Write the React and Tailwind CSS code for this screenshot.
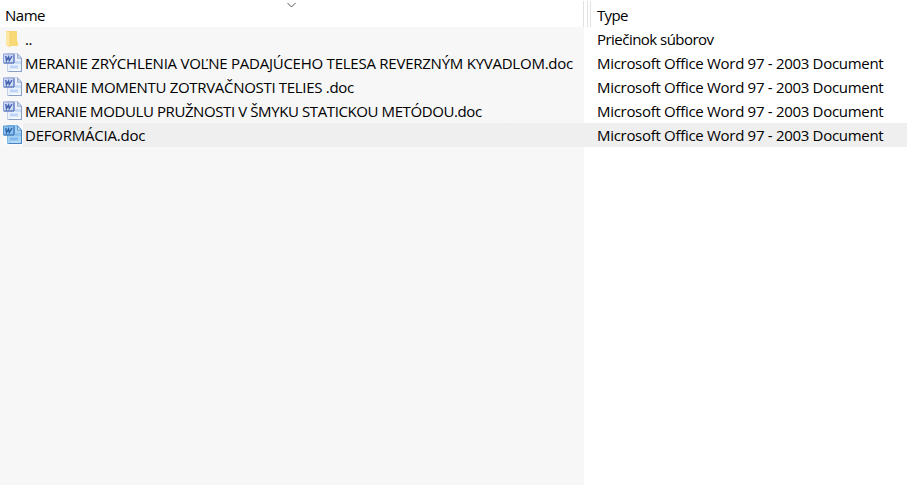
import React from 'react';

const FILES = [
    { name: 'MERANIE ZRÝCHLENIA VOĽNE PADAJÚCEHO TELESA REVERZNÝM KYVADLOM.doc', spacing: 'tracking-[-0.24px]' },
    { name: 'MERANIE MOMENTU ZOTRVAČNOSTI TELIES .doc', spacing: 'tracking-[-0.31px]' },
    { name: 'MERANIE MODULU PRUŽNOSTI V ŠMYKU STATICKOU METÓDOU.doc', spacing: 'tracking-[-0.4px]' },
    { name: 'DEFORMÁCIA.doc', spacing: 'tracking-[-0.22px]', selected: true },
];

const FolderIcon = () => (
    <svg width="16" height="18" viewBox="0 0 16 18" className="ml-1 shrink-0">
        <path d="M5 1h8v10.5h1V16H5z" fill="#f8d978" />
        <path d="M2 1h3v13H2z" fill="#f4d275" />
        <path d="M2 1l4 1.5v15L2 15.5z" fill="#ffe8a3" />
        <path d="M6 2.5v14.5" stroke="#e9c766" strokeWidth="0.6" />
    </svg>
);

const WordIcon = ({ selected }) => (
    <svg width="20" height="20" viewBox="0 0 20 20" className="ml-[3px] shrink-0">
        {selected && <path d="M0 0h20v20H0z" fill="#fafbfc" />}
        <path d="M4.5 .5h10l4 4.5v13.5h-14z" fill={selected ? '#a6d1f4' : '#eaf1fc'} stroke={selected ? '#86b9e5' : '#c3cfe6'} />
        <path d="M18.5 5v13.5h-13" fill="none" stroke={selected ? '#4585c2' : '#8a9fc6'} />
        <path d="M14.5 .8l4 4.5h-4z" fill={selected ? '#c4e2fa' : '#cbdcf4'} stroke={selected ? '#4f8fca' : '#8ba2c9'} strokeWidth="0.8" />
        <path d="M12 8h6v3h-6z" fill={selected ? '#8cc0ed' : '#c7dbf6'} />
        <path d="M7 12.5h8v3H7z" fill={selected ? '#83baeb' : '#c0d5f4'} />
        <path d="M8 17h9" stroke={selected ? '#c9e4fa' : '#fff'} />
        <path d="M.5 1h10.5v9H.5z" fill={selected ? '#8fc3ef' : '#cfdaf4'} stroke={selected ? '#5597d3' : '#8ba2d8'} />
        <path d="M11 1.5v8.5H1" fill="none" stroke={selected ? '#3473b5' : '#4968b2'} />
        <path d="M2.8 3l.7 4.5 2.1-3.6.7 3.6 2.7-4.5" fill="none" stroke={selected ? '#2863a8' : '#3d5fae'} strokeWidth="1.4" />
    </svg>
);

const App = () => {
    return (
        <div className="flex h-[485px] w-[907px] flex-col overflow-hidden bg-white font-['Open_Sans','Noto_Sans',sans-serif] text-[15px] leading-6 whitespace-nowrap text-black">
            {/* Column headings */}
            <div className="flex h-[27px] shrink-0">
                <div className="relative w-[583px] pt-[3px] pl-[5px]">
                    <span className="tracking-[-0.5px]">Name</span>
                    <svg width="10" height="6" viewBox="0 0 10 6" className="absolute top-[2px] left-[287px]">
                        <path d="M.5 1l4 4 4-4" fill="none" stroke="#555" />
                    </svg>
                </div>
                <div className="mt-px flex w-2 justify-between">
                    <div className="w-px bg-[#e2e2e2]" />
                    <div className="w-px bg-[#e2e2e2]" />
                    <div className="w-px bg-[#e2e2e2]" />
                </div>
                <div className="pt-[3px] pl-[6px] tracking-[-0.65px]">Type</div>
            </div>

            <div className="flex-1 bg-linear-to-r from-[#f7f7f7] from-[584px] to-white to-[584px]">
                <div className="flex h-6">
                    <div className="flex w-[597px] items-center">
                        <FolderIcon />
                        <span className="pl-[5px] tracking-[-0.5px]">..</span>
                    </div>
                    <div className="tracking-[-0.53px]">Priečinok súborov</div>
                </div>

                {FILES.map((file) => (
                    <div key={file.name} className="flex h-6 items-center">
                        <WordIcon selected={file.selected} />
                        <div className={`flex h-6 flex-1 pl-[2px] ${file.selected ? 'bg-[#efefef]' : ''}`}>
                            <div className="w-[572px]">
                                <span className={file.spacing}>{file.name}</span>
                            </div>
                            <span className="tracking-[-0.3px]">Microsoft Office Word 97 - 2003 Document</span>
                        </div>
                    </div>
                ))}
            </div>
        </div>
    );
};

export default App;
